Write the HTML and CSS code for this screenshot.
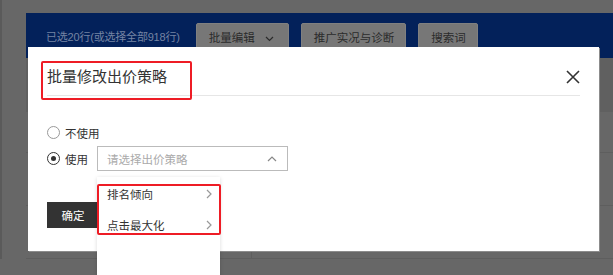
FILE: index.html
```html
<!DOCTYPE html>
<html lang="zh-CN">
<head>
  <meta charset="UTF-8" />
  <meta name="viewport" content="width=device-width, initial-scale=1.0" />
  <title>批量修改出价策略</title>
  <link rel="stylesheet" href="styles.css">
</head>
<body>
  <div class="page">
    <div class="toolbar">
      <span class="selected">已选20行(或选择全部918行)</span>
      <button class="tool-btn">批量编辑
        <svg class="chev-down" width="9" height="6" viewBox="0 0 9 6"><path d="M1 1l3.5 3.5L8 1" fill="none" stroke="#2b2b2b" stroke-width="1.2"/></svg>
      </button>
      <button class="tool-btn">推广实况与诊断</button>
      <button class="tool-btn">搜索词</button>
    </div>
    <div class="table">
      <div class="row row-head"></div>
      <div class="row row-first"></div>
      <div class="row"></div>
      <div class="row"><span class="cell"></span></div>
    </div>
  </div>

  <div class="modal">
    <div class="modal-header">
      <h3 class="modal-title">批量修改出价策略</h3>
      <svg class="close" width="14" height="14" viewBox="0 0 14 14"><path d="M1 1l12 12M13 1L1 13" stroke="#333" stroke-width="1.6"/></svg>
    </div>
    <div class="modal-body">
      <div class="radio-row">
        <label class="radio"><span class="radio-dot"></span>不使用</label>
      </div>
      <div class="radio-row">
        <label class="radio checked"><span class="radio-dot"></span>使用</label>
        <div class="select">
          <span class="placeholder">请选择出价策略</span>
          <svg width="10" height="6" viewBox="0 0 10 6"><path d="M1 5l4-4 4 4" fill="none" stroke="#888" stroke-width="1.2"/></svg>
        </div>
      </div>
      <button class="btn-ok">确定</button>
    </div>
    <div class="mark mark-title"></div>
  </div>

  <div class="dropdown">
    <div class="option">排名倾向
      <svg width="6" height="10" viewBox="0 0 6 10"><path d="M1 1l4 4-4 4" fill="none" stroke="#999" stroke-width="1.2"/></svg>
    </div>
    <div class="option">点击最大化
      <svg width="6" height="10" viewBox="0 0 6 10"><path d="M1 1l4 4-4 4" fill="none" stroke="#999" stroke-width="1.2"/></svg>
    </div>
    <div class="mark mark-options"></div>
  </div>
</body>
</html>
```

FILE: styles.css
```css
* {
  box-sizing: border-box;
}
body {
  margin: 0;
  width: 613px;
  height: 275px;
  overflow: hidden;
  background: #676767;
  font-family: "Liberation Sans", "Noto Sans CJK SC", sans-serif;
  font-size: 11.5px;
  color: #333;
  position: relative;
}
.page {
  padding: 13px 0 0 24px;
  border-left: 2px solid #5a5a5a;
}
.toolbar {
  height: 45px;
  background: #03215a;
  display: flex;
  align-items: flex-start;
  padding: 10px 0 0 20px;
  gap: 12px;
}
.selected {
  line-height: 29px;
  font-size: 11px;
  color: #7584a3;
  letter-spacing: -0.2px;
  margin-right: 4px;
}
.tool-btn {
  height: 32px;
  padding: 0 11px 0 12px;
  background: #777;
  border: 1px solid #808080;
  border-radius: 2px;
  color: #2b2b2b;
  font-family: inherit;
  font-size: 11.5px;
  line-height: 28px;
  display: flex;
  align-items: flex-start;
}
.chev-down {
  margin: 12px 3px 0 10px;
}
.row {
  height: 53px;
  border-bottom: 1px solid #5e5e5e;
}
.row-head {
  height: 54px;
  background: #606060;
  border-bottom: none;
}
.row-first {
  height: 41px;
}
.cell {
  display: block;
  width: 226px;
  height: 100%;
  border-right: 1px solid #5e5e5e;
}

.modal {
  position: absolute;
  left: 28px;
  top: 47px;
  width: 571px;
  height: 204px;
  background: #fff;
  box-shadow: 1px 1px 0 #8c8c8c;
}
.modal-header {
  height: 49px;
  margin: 0 19px;
  padding-top: 11px;
  border-bottom: 1px solid #e6e6e6;
  display: flex;
  align-items: flex-start;
  justify-content: space-between;
}
.modal-title {
  margin: 0;
  font-size: 15px;
  font-weight: normal;
  line-height: 38px;
  color: #333;
}
.close {
  margin: 12px 0 0 0;
}
.modal-body {
  padding: 24px 19px 0;
}
.radio-row {
  display: flex;
  align-items: center;
  height: 25px;
  margin-bottom: 1px;
}
.radio {
  min-width: 50px;
  white-space: nowrap;
  display: flex;
  align-items: center;
  color: #333;
}
.radio-dot {
  width: 13px;
  height: 13px;
  border: 1px solid #999;
  border-radius: 50%;
  margin-right: 5px;
  position: relative;
}
.checked .radio-dot {
  border-color: #333;
}
.checked .radio-dot::after {
  content: "";
  position: absolute;
  left: 3px;
  top: 3px;
  width: 5px;
  height: 5px;
  border-radius: 50%;
  background: #333;
}
.select {
  width: 191px;
  height: 25px;
  border: 1px solid #bbb;
  display: flex;
  align-items: center;
  justify-content: space-between;
  padding: 0 10px 0 9px;
}
.placeholder {
  color: #aaa;
}
.btn-ok {
  margin-top: 30px;
  width: 52px;
  height: 26px;
  border: none;
  background: #333;
  color: #fff;
  font-family: inherit;
  font-size: 11.5px;
}

.dropdown {
  position: absolute;
  left: 97px;
  top: 177px;
  width: 123px;
  height: 110px;
  background: #fff;
  padding-top: 1px;
  box-shadow: 0 1px 4px rgba(0, 0, 0, 0.15);
}
.option {
  height: 31px;
  display: flex;
  align-items: center;
  justify-content: space-between;
  padding: 0 8px 0 10px;
  color: #333;
}
.mark {
  position: absolute;
  border: 2px solid #ee1c25;
  border-radius: 2px;
}
.mark-title {
  left: 13px;
  top: 14px;
  width: 151px;
  height: 39px;
}
.mark-options {
  left: 0;
  top: 7px;
  width: 124px;
  height: 51px;
}
```
